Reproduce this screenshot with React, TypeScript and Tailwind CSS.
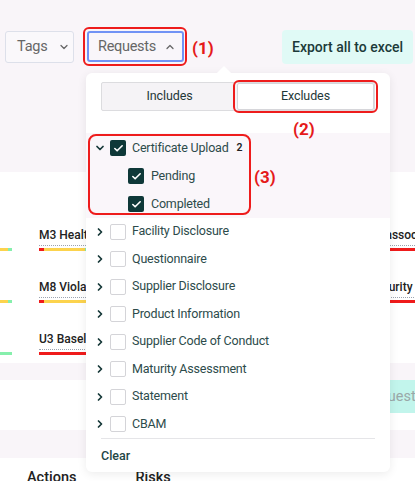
import { Check, ChevronDown, ChevronRight, ChevronUp } from "lucide-react"

const FONT = { fontFamily: "Roboto, 'Noto Sans', sans-serif" }

const items = [
  "Facility Disclosure",
  "Questionnaire",
  "Supplier Disclosure",
  "Product Information",
  "Supplier Code of Conduct",
  "Maturity Assessment",
  "Statement",
  "CBAM",
]

function Box({ checked }: { checked?: boolean }) {
  if (checked) {
    return (
      <span className="flex h-4 w-4 shrink-0 items-center justify-center rounded-[2px] bg-[#0e3838]">
        <Check className="h-[11px] w-[11px] text-white" strokeWidth={3.5} />
      </span>
    )
  }
  return <span className="block h-4 w-4 shrink-0 rounded-[2px] border border-[#d4d4d8] bg-white" />
}

function Bar({ parts }: { parts: [string, number][] }) {
  return (
    <div className="flex h-[3px] w-full overflow-hidden">
      {parts.map(([c, w], i) => (
        <span key={i} className={`shrink-0 ${c}`} style={{ width: w }} />
      ))}
    </div>
  )
}

function Cell({ text, parts }: { text: string; parts: [string, number][] }) {
  return (
    <div className="flex w-max flex-col">
      <span className="whitespace-nowrap border-b border-dotted border-[#9ca3af] pb-[1px] text-[12px] font-medium leading-[17px] text-[#222]">
        {text}
      </span>
      <div className="mt-[2px]">
        <Bar parts={parts} />
      </div>
    </div>
  )
}

type Row = {
  left: [string, number][]
  mid: string
  midBar: [string, number][]
  right: string
  rightPad: string
  rightBar: [string, number][]
}

const rows: Row[] = [
  {
    left: [["bg-[#fcd34d]", 8], ["bg-[#86efac]", 4]],
    mid: "M3 Health and safety",
    midBar: [["bg-[#ef1b1b]", 5], ["bg-[#fcd34d]", 41], ["bg-[#86efac]", 3], ["bg-[#fcd34d]", 200]],
    right: "Freedom of association",
    rightPad: "pl-[17px]",
    rightBar: [["bg-[#ef1b1b]", 200]],
  },
  {
    left: [["bg-[#fcd34d]", 8], ["bg-[#86efac]", 4]],
    mid: "M8 Violation of rights",
    midBar: [["bg-[#ef1b1b]", 5], ["bg-[#fcd34d]", 200]],
    right: "Information security",
    rightPad: "pl-[0px]",
    rightBar: [["bg-[#ef1b1b]", 200]],
  },
  {
    left: [["bg-[#86efac]", 12]],
    mid: "U3 Baseline emissions",
    midBar: [["bg-[#ef1b1b]", 200]],
    right: "",
    rightPad: "",
    rightBar: [],
  },
]

export default function App() {
  return (
    <div className="relative h-[481px] w-[415px] overflow-hidden bg-white" style={FONT}>
      {/* page behind */}
      <div className="h-[172px] bg-[#f9f5f9] pt-[30px]">
        <div className="flex items-start">
          <button className="ml-[5px] mt-[1px] flex h-[32px] w-[69px] items-center gap-[10px] rounded-[3px] border border-[#dde0ea] bg-[#faf8fb] pl-[11px] text-[14.5px] tracking-[-0.2px] text-[#666]">
            Tags
            <ChevronDown className="h-[12px] w-[12px]" strokeWidth={2.5} />
          </button>
          <button className="ml-[13px] mt-[1px] flex h-[31px] w-[97px] items-center gap-[8px] rounded-[3px] border-2 border-[#7193f5] bg-[#f9f6fa] pl-[9px] text-[14.5px] tracking-[-0.3px] text-[#666]">
            Requests
            <ChevronUp className="h-[12px] w-[12px]" strokeWidth={2.5} />
          </button>
          <button className="ml-auto mr-[2px] h-[34px] w-[131px] rounded-[4px] bg-[#e0faf6] text-[14px] font-medium text-[#1c3a3a]">
            Export all to excel
          </button>
        </div>
      </div>

      <div className="flex h-[191px] flex-col gap-[28px] pt-[55px]">
        {rows.map((r, i) => (
          <div key={i} className="grid grid-cols-[12px_238px_1fr] items-end gap-x-[27px]">
            <Bar parts={r.left} />
            <div className="w-[200px] overflow-hidden">
              <Cell text={r.mid} parts={r.midBar} />
            </div>
            <div className={r.rightPad}>
              {r.right && <Cell text={r.right} parts={r.rightBar} />}
            </div>
          </div>
        ))}
      </div>

      <div className="h-[17px] bg-[#f9f5f9]" />
      <div className="flex h-[50px] items-start">
        <button className="ml-[359px] h-[33px] w-[90px] shrink-0 rounded-[3px] bg-[#c2f5ec] pl-[4px] text-left text-[14.5px] text-[#9aa8a8]">
          Request
        </button>
      </div>
      <div className="h-[28px] bg-[#f9f5f9]" />
      <div className="flex gap-[59px] pl-[27px] pt-[9px] text-[14.5px] font-medium text-[#222]">
        <span>Actions</span>
        <span>Risks</span>
      </div>

      {/* dropdown */}
      <div className="absolute left-[86px] top-[73px] h-[399px] w-[304px] rounded-[6px] bg-white shadow-[0_2px_10px_rgba(0,0,0,0.08)]">
        <span className="absolute -top-[5px] left-[133px] h-[10px] w-[10px] rotate-45 bg-white" />
        <div className="relative px-[15px] pt-[9px]">
          <div className="flex h-[29px] rounded-[2px] border border-[#dcdcdf] bg-[#f5f3f6] text-[12.5px] tracking-[-0.1px] text-[#1f3838]">
            <div className="flex flex-1 items-center justify-center">Includes</div>
            <div className="flex flex-1 items-center justify-center rounded-[2px] border border-[#d6d6da] bg-white">
              Excludes
            </div>
          </div>
        </div>

        <div className="mt-[22px] bg-[#faf6fa] pt-[1px]">
          <div className="flex h-[28px] items-center pl-[8px] text-[12.5px] tracking-[-0.2px] text-[#2d4b4b]">
            <ChevronDown className="h-[12px] w-[12px] text-[#163838]" strokeWidth={3.5} />
            <span className="ml-[4px] block">
              <Box checked />
            </span>
            <span className="ml-[6px]">Certificate Upload</span>
            <span className="ml-[8px] text-[10.5px] font-semibold text-[#222]">2</span>
          </div>
          {["Pending", "Completed"].map((c) => (
            <div key={c} className="flex h-[28px] items-center gap-[7px] pl-[42px] text-[12.5px] tracking-[-0.2px] text-[#2d4b4b]">
              <Box checked />
              <span>{c}</span>
            </div>
          ))}
        </div>

        <div>
          {items.map((label) => (
            <div key={label} className="flex h-[27.5px] items-center pl-[8px] text-[12.5px] tracking-[-0.2px] text-[#2d4b4b]">
              <ChevronRight className="h-[12px] w-[12px] text-[#163838]" strokeWidth={3.5} />
              <span className="ml-[4px] block">
                <Box />
              </span>
              <span className="ml-[6px]">{label}</span>
            </div>
          ))}
        </div>
        <div className="mx-[15px] border-t border-[#e5e5e8]" />
        <div className="flex h-[34px] items-center pl-[15px] text-[12.5px] font-medium text-[#1e4646]">Clear</div>
      </div>

      {/* annotations */}
      <div className="pointer-events-none absolute left-[83px] top-[27px] h-[39px] w-[104px] rounded-[6px] border-2 border-[#ee1c1c]" />
      <span className="absolute left-[192px] top-[36px] text-[17px] font-bold text-[#e51a1a]">(1)</span>
      <div className="pointer-events-none absolute left-[233px] top-[80px] h-[33px] w-[145px] rounded-[6px] border-2 border-[#ee1c1c]" />
      <span className="absolute left-[293px] top-[117px] text-[17px] font-bold text-[#e51a1a]">(2)</span>
      <div className="pointer-events-none absolute left-[88px] top-[134px] h-[81px] w-[163px] rounded-[8px] border-2 border-[#ee1c1c]" />
      <span className="absolute left-[254px] top-[165px] text-[17px] font-bold text-[#e51a1a]">(3)</span>
    </div>
  )
}
